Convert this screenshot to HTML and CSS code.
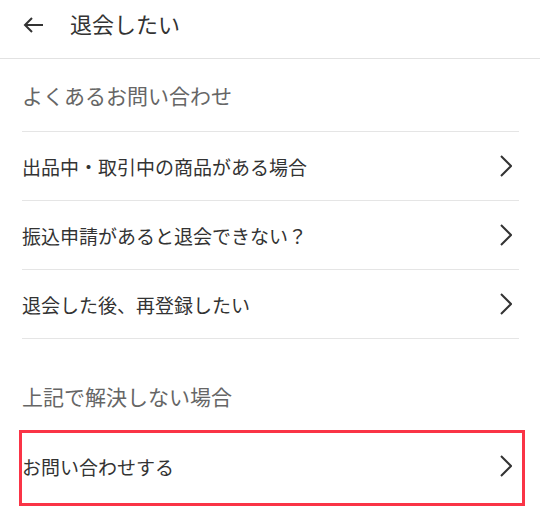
FILE: index.html
```html
<!DOCTYPE html>
<html lang="ja">
<head>
<meta charset="utf-8">
<link rel="stylesheet" href="styles.css">
</head>
<body>
<header class="header">
  <svg class="back" width="20" height="16" viewBox="0 0 20 16"><path d="M20 8H2M9 1L2 8L9 15" fill="none" stroke="#333" stroke-width="2"/></svg>
  <h1 class="title">退会したい</h1>
</header>
<main class="content">
  <h2 class="section-title">よくあるお問い合わせ</h2>
  <ul class="list">
    <li class="row"><span class="row-text">出品中・取引中の商品がある場合</span><svg class="chev" width="12" height="22" viewBox="0 0 12 22"><path d="M1 1L11 11L1 21" fill="none" stroke="#333" stroke-width="2"/></svg></li>
    <li class="row"><span class="row-text">振込申請があると退会できない？</span><svg class="chev" width="12" height="22" viewBox="0 0 12 22"><path d="M1 1L11 11L1 21" fill="none" stroke="#333" stroke-width="2"/></svg></li>
    <li class="row"><span class="row-text">退会した後、再登録したい</span><svg class="chev" width="12" height="22" viewBox="0 0 12 22"><path d="M1 1L11 11L1 21" fill="none" stroke="#333" stroke-width="2"/></svg></li>
  </ul>
  <h2 class="section-title second">上記で解決しない場合</h2>
  <ul class="list last">
    <li class="row highlighted"><span class="row-text">お問い合わせする</span><svg class="chev" width="12" height="22" viewBox="0 0 12 22"><path d="M1 1L11 11L1 21" fill="none" stroke="#333" stroke-width="2"/></svg><span class="mark"></span></li>
  </ul>
</main>
</body>
</html>
```

FILE: styles.css
```css
* { box-sizing: border-box; }
html, body { margin: 0; padding: 0; background: #fff; }
body {
  font-family: "Noto Sans CJK JP", "Noto Sans", sans-serif;
  color: #333;
  width: 540px;
}
.header {
  height: 59px;
  border-bottom: 1px solid #e2e2e2;
  display: flex;
  align-items: center;
  padding: 0 0 8px 23px;
}
.back { flex: none; }
.title {
  margin: 0 0 4px 27px;
  font-size: 22px;
  font-weight: 400;
  color: #333;
  line-height: 1;
}
.content { padding: 0 21px 10px 22px; }
.section-title {
  margin: 0;
  height: 72px;
  display: flex;
  align-items: center;
  font-size: 21px;
  font-weight: 400;
  color: #666;
}
.section-title.second {
  height: 92px;
  padding-top: 22px;
}
.list {
  list-style: none;
  margin: 0;
  padding: 0;
  border-bottom: 1px solid #e5e5e5;
}
.list.last { border-bottom: none; }
.row {
  position: relative;
  height: 69px;
  border-top: 1px solid #e5e5e5;
  display: flex;
  align-items: center;
  justify-content: space-between;
  padding-right: 7px;
}
.row-text {
  font-size: 19px;
  color: #333;
}
.chev { flex: none; }
.mark {
  position: absolute;
  left: -3px;
  top: -2px;
  right: -6px;
  bottom: -6px;
  border: 3px solid #fa3446;
}
```
